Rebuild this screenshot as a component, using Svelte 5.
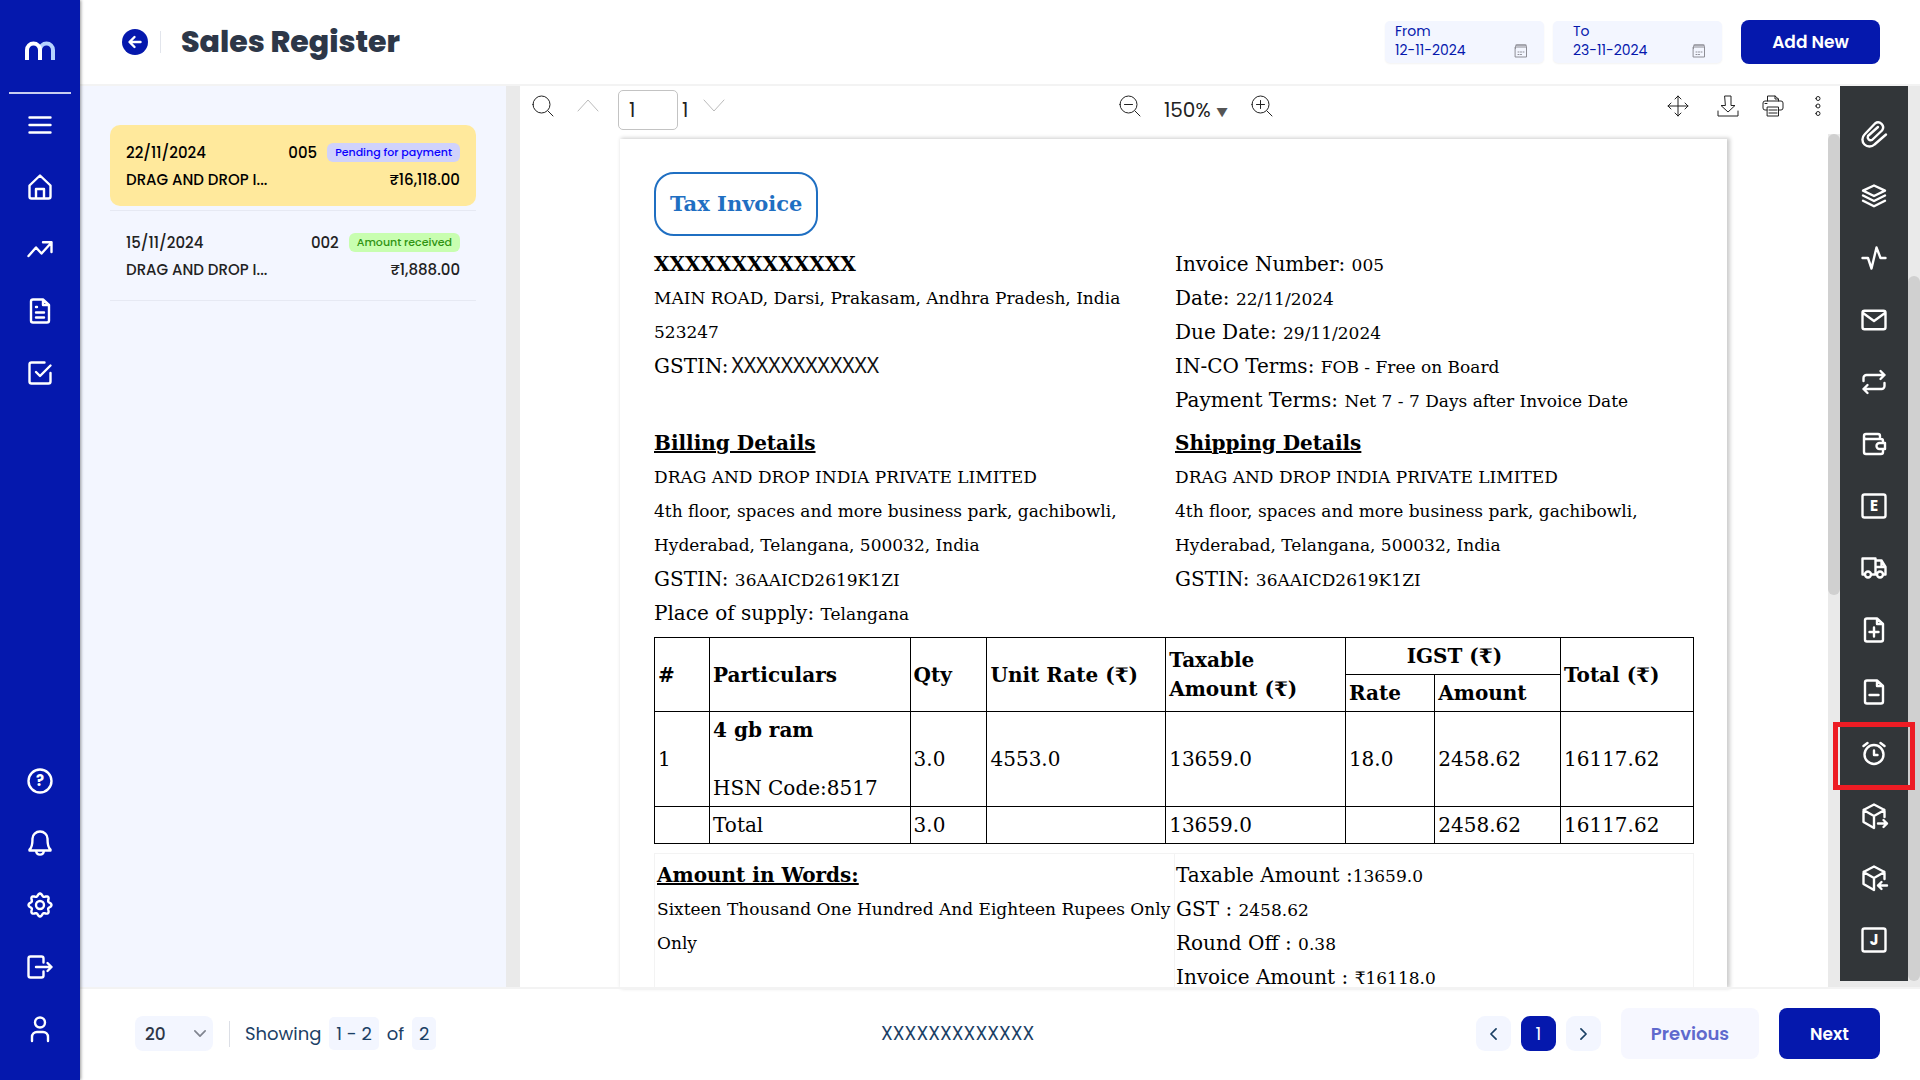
<script>
let pageSize = $state('20');
let fromDate = $state('12-11-2024');
let toDate = $state('23-11-2024');
let pdfPage = $state('1');
let selected = $state(0);

const invoices = [
     { date: '22/11/2024', no: '005', status: 'Pending for payment', kind: 'pending', party: 'DRAG AND DROP I...', amount: '₹16,118.00' },
     { date: '15/11/2024', no: '002', status: 'Amount received', kind: 'received', party: 'DRAG AND DROP I...', amount: '₹1,888.00' }
];

// icons are drawn around 0,0
const file = 'M3-11.5H-7a2 2 0 0 0-2 2V9.5a2 2 0 0 0 2 2H7a2 2 0 0 0 2-2V-6L3-11.5V-6H9';
const square = 'M-9.5-11.5h19a2 2 0 0 1 2 2v19a2 2 0 0 1-2 2h-19a2 2 0 0 1-2-2v-19a2 2 0 0 1 2-2Z';
const cube = 'M10.5 1V-6L0-11.5-10.5-6V6L0 12V0M-10.5-6L0 0 10.5-6';
const calendar = 'M-10-12H10M-11-8h22V12h-22ZM-11-5v-4a3 3 0 0 1 3-3H8a3 3 0 0 1 3 3v4M-6 2h2M-1 2h2M4 2h2M-6 7h2M-1 7h2';
const disc = (x, y, r) => `M${x - r} ${y}a${r} ${r} 0 1 0 ${2 * r} 0a${r} ${r} 0 1 0 ${-2 * r} 0Z`;
const lens = disc(-1.5, -1.5, 8.5) + 'M5 5L10 10';

function gear() {
     let points = [];
     for (let i = 0; i < 96; i++) {
          const a = (i / 96) * Math.PI * 2;
          const r = 10.2 + 1.3 * Math.cos(a * 8);
          points.push((r * Math.sin(a)).toFixed(2) + ' ' + (-r * Math.cos(a)).toFixed(2));
     }
     return 'M' + points.join('L') + 'Z' + disc(0, 0, 4);
}

const topNav = [
     { name: 'Menu', d: 'M-10.5-7.5h21M-10.5 0h21M-10.5 7.5h21' },
     { name: 'Home', d: 'M-10.5-1.5L0-11.5 10.5-1.5V9.5a2 2 0 0 1-2 2h-17a2 2 0 0 1-2-2ZM-4 11.5V2h8v9.5' },
     { name: 'Trends', d: 'M-11.5 7L-4-1.5 1.5 4.5 11.5-6.5M3-6.8H11.5V3' },
     { name: 'Documents', d: file + 'M-4-4h1M-4 1.5h8M-4 6.5h8' },
     { name: 'Tasks', d: 'M4.5-10.5H-8.5a2 2 0 0 0-2 2V8.5a2 2 0 0 0 2 2H8.5a2 2 0 0 0 2-2V0M-4-1L0 3 10.5-7.5' }
];
const bottomNav = [
     { name: 'Help', d: disc(0, 0, 11.5), letter: '?' },
     { name: 'Notifications', d: 'M-7.5-4.5a7.5 7 0 0 1 15 0C7.5 2 8 5 10.5 6.5V7.5H-10.5V6.5C-8 5-7.5 2-7.5-4.5ZM-4 7.5c.5 5.5 7.5 5.5 8 0' },
     { name: 'Settings', d: gear() },
     { name: 'Log out', d: 'M3.5-4.5V-8.5a2 2 0 0 0-2-2H-9.5a2 2 0 0 0-2 2V8.5a2 2 0 0 0 2 2H1.5a2 2 0 0 0 2-2V4.5M-4 0H11.5M7.5-4L11.5 0 7.5 4' },
     { name: 'Profile', d: disc(0, -6.5, 5) + 'M-8 12V8a5 5 0 0 1 5-5H3a5 5 0 0 1 5 5v4' }
];
const rail = [
     { name: 'Attachments', d: 'M12 .5L.5 10.5a7 7 0 0 1-10-10L1-10.500a5 5 0 0 1 7 7L-2 6A3 3 0 0 1-6 2L4-7' },
     { name: 'Layers', d: 'M0-10.5L11-5.3 0 0-11-5.3ZM-11-.5L0 5 11-.5M-11 4.7L0 10.2 11 4.7' },
     { name: 'Activity', d: 'M-11.5 0H-6L-2.5 10.5 2.5-10.5 6.5 0H11.5' },
     { name: 'Email', d: 'M-9.5-9.3h19a2 2 0 0 1 2 2V7.3a2 2 0 0 1-2 2h-19a2 2 0 0 1-2-2V-7.3a2 2 0 0 1 2-2ZM-11-7L0 1 11-7' },
     { name: 'Recurring', d: 'M-10.5-1V-4a3 3 0 0 1 3-3H10.5M6.5-11L10.5-7 6.5-3M10.5 1V4a3 3 0 0 1-3 3H-10.5M-6.5 11L-10.5 7-6.5 3' },
     { name: 'Wallet', d: 'M6-5V-8a2 2 0 0 0-2-2H-8a2 2 0 0 0-2 2V8a2 2 0 0 0 2 2H7a2 2 0 0 0 2-2V5M-10-7a2 2 0 0 0 2 2H7a2 2 0 0 1 2 2v2M11-1H5.5a3 3 0 0 0 0 6H11Z' },
     { name: 'E-invoice', d: square, letter: 'E' },
     { name: 'E-way bill', d: 'M-9.5 6.5h-2V-9.5H1.5V6.5H-2.5M1.5-7.5H7.5L11.5-1V6.5H9.5M1.5 6.5H2.5M7.5-7.5V-1M1.5-1H11.5' + disc(-6, 6.5, 3) + disc(6, 6.5, 3) },
     { name: 'Add note', d: file + 'M-4.5 2h9M0-2.5v9' },
     { name: 'Remove note', d: file + 'M-4.5 3h9' },
     { name: 'Reminder', d: disc(0, 0.5, 9.5) + 'M-10.5-8L-6.5-11M10.5-8L6.5-11M0-3.5V1H3.5', marked: true },
     { name: 'Goods out', d: cube + 'M4 7.5H13M9.5 4L13 7.5 9.5 11' },
     { name: 'Goods in', d: cube + 'M13 7.5H4M7.5 4L4 7.5 7.5 11' },
     { name: 'Journal', d: square, letter: 'J' }
];

const address = ['DRAG AND DROP INDIA PRIVATE LIMITED', '4th floor, spaces and more business park, gachibowli,', 'Hyderabad, Telangana, 500032, India'];
const terms = [
     ['Invoice Number:', '005'],
     ['Date:', '22/11/2024'],
     ['Due Date:', '29/11/2024'],
     ['IN-CO Terms:', 'FOB - Free on Board'],
     ['Payment Terms:', 'Net 7 - 7 Days after Invoice Date']
];
</script>

{#snippet icon(d, letter, size)}
     <svg class={size ?? 'icon'} viewBox="-14 -14 28 28" aria-hidden="true">
          <path {d} />
          {#if letter}
               <text x="0" y="5" text-anchor="middle">{letter}</text>
          {/if}
     </svg>
{/snippet}

<div class="app">
     <aside class="sidebar">
          <a class="logo" href="#home" aria-label="Home page">
               <svg width="30" height="18" viewBox="0 0 30 18" aria-hidden="true">
                    <path d="M15 8A6 6 0 0 1 28 8V18" stroke="#b5d3ff" />
                    <path d="M2 18V8a6.5 6.5 0 0 1 13 0V18" stroke="#fff" />
               </svg>
          </a>
          <nav class="top-nav">
               {#each topNav as item}
                    <button type="button" aria-label={item.name}>{@render icon(item.d)}</button>
               {/each}
          </nav>
          <nav class="bottom-nav">
               {#each bottomNav as item}
                    <button type="button" aria-label={item.name}>{@render icon(item.d, item.letter)}</button>
               {/each}
          </nav>
     </aside>

     <div class="content">
          <header>
               <button class="back" type="button" aria-label="Back">
                    <svg width="26" height="26" viewBox="-13 -13 26 26" aria-hidden="true"><path d="M5.5 0H-5M-.5-5L-5.5 0-.5 5" /></svg>
               </button>
               <h1>Sales Register</h1>
               <div class="date">
                    <label for="from">From</label>
                    <input id="from" type="text" bind:value={fromDate}>
                    {@render icon(calendar, '', 'calendar')}
               </div>
               <div class="date to">
                    <label for="to">To</label>
                    <input id="to" type="text" bind:value={toDate}>
                    {@render icon(calendar, '', 'calendar')}
               </div>
               <button class="primary add" type="button">Add New</button>
          </header>

          <main>
               <section class="list">
                    {#each invoices as inv, index}
                         <div class="slot">
                              <button type="button" class="card" class:active={selected == index} onclick={() => selected = index}>
                                   <span class="row">
                                        <span class="grow">{inv.date}</span>
                                        <span>{inv.no}</span>
                                        <span class="badge {inv.kind}">{inv.status}</span>
                                   </span>
                                   <span class="row">
                                        <span class="grow">{inv.party}</span>
                                        <span>{inv.amount}</span>
                                   </span>
                              </button>
                         </div>
                    {/each}
               </section>
               <div class="list-track"></div>

               <section class="viewer">
                    <div class="toolbar">
                         <div class="tools">
                              <button type="button" aria-label="Search">{@render icon(lens, '', 'thin')}</button>
                              <button type="button" class="faded prev" aria-label="Previous page">{@render icon('M-10 5L0-6 10 5', '', 'thin')}</button>
                              <input type="text" aria-label="Page" bind:value={pdfPage}>
                              <span class="count">1</span>
                              <button type="button" class="faded" aria-label="Next page">{@render icon('M-10-6L0 5 10-6', '', 'thin')}</button>
                         </div>
                         <div class="tools">
                              <button type="button" aria-label="Zoom out">{@render icon(lens + 'M-5.5-1.5h8', '', 'thin')}</button>
                              <button type="button" class="zoom">150% <small>▼</small></button>
                              <button type="button" aria-label="Zoom in">{@render icon(lens + 'M-5.5-1.5h8M-1.5-5.5v8', '', 'thin')}</button>
                         </div>
                         <div class="tools right">
                              <button type="button" aria-label="Pan">{@render icon('M-10 0h20M0-10v20M-7-3L-10 0-7 3M7-3L10 0 7 3M-3-7L0-10 3-7M-3 7L0 10 3 7', '', 'thin')}</button>
                              <button type="button" class="download" aria-label="Download">{@render icon('M-3-10h6v9.5h4L0 6-7-.5h4ZM-10 5v5H10V5', '', 'thin')}</button>
                              <button type="button" aria-label="Print">{@render icon('M-5.5-5V-10H2L5.5-7V-5M2-10V-7H5.5M-6 4H-8a2 2 0 0 1-2-2V-3a2 2 0 0 1 2-2H8a2 2 0 0 1 2 2V2a2 2 0 0 1-2 2H6M-5.5 1h11v9h-11ZM-4 4h8M-4 7h8M-8-2.5h2', '', 'thin')}</button>
                              <button type="button" aria-label="More">{@render icon(disc(0, -7.5, 2) + disc(0, 0, 2) + disc(0, 7.5, 2), '', 'thin')}</button>
                         </div>
                    </div>

                    <div class="scroller">
                         <article class="page">
                              <h2 class="stamp">Tax Invoice</h2>
                              <div class="cols">
                                   <div>
                                        <p><b>XXXXXXXXXXXXX</b></p>
                                        <p class="small">MAIN ROAD, Darsi, Prakasam, Andhra Pradesh, India 523247</p>
                                        <p>GSTIN:<span class="masked">XXXXXXXXXXXX</span></p>
                                   </div>
                                   <div>
                                        {#each terms as [label, value]}
                                             <p>{label} <span class="val">{value}</span></p>
                                        {/each}
                                   </div>
                              </div>
                              <div class="cols parties">
                                   <div>
                                        <h3>Billing Details</h3>
                                        {#each address as line}
                                             <p class="small">{line}</p>
                                        {/each}
                                        <p>GSTIN: <span class="val">36AAICD2619K1ZI</span></p>
                                        <p>Place of supply: <span class="val">Telangana</span></p>
                                   </div>
                                   <div>
                                        <h3>Shipping Details</h3>
                                        {#each address as line}
                                             <p class="small">{line}</p>
                                        {/each}
                                        <p>GSTIN: <span class="val">36AAICD2619K1ZI</span></p>
                                   </div>
                              </div>
                              <table>
                                   <colgroup>
                                        <col style="width: 5.3%"><col style="width: 19.3%"><col style="width: 7.4%"><col style="width: 17.2%">
                                        <col style="width: 17.3%"><col style="width: 8.6%"><col style="width: 12.1%"><col style="width: 12.8%">
                                   </colgroup>
                                   <thead>
                                        <tr>
                                             <th rowspan="2">#</th>
                                             <th rowspan="2">Particulars</th>
                                             <th rowspan="2">Qty</th>
                                             <th rowspan="2">Unit Rate (₹)</th>
                                             <th rowspan="2">Taxable Amount (₹)</th>
                                             <th colspan="2" class="center">IGST (₹)</th>
                                             <th rowspan="2">Total (₹)</th>
                                        </tr>
                                        <tr>
                                             <th>Rate</th>
                                             <th>Amount</th>
                                        </tr>
                                   </thead>
                                   <tbody>
                                        <tr>
                                             <td>1</td>
                                             <td><b>4 gb ram</b><br><br>HSN Code:8517</td>
                                             <td>3.0</td>
                                             <td>4553.0</td>
                                             <td>13659.0</td>
                                             <td>18.0</td>
                                             <td>2458.62</td>
                                             <td>16117.62</td>
                                        </tr>
                                        <tr>
                                             <td></td>
                                             <td>Total</td>
                                             <td>3.0</td>
                                             <td></td>
                                             <td>13659.0</td>
                                             <td></td>
                                             <td>2458.62</td>
                                             <td>16117.62</td>
                                        </tr>
                                   </tbody>
                              </table>
                              <div class="cols summary">
                                   <div>
                                        <h3>Amount in Words:</h3>
                                        <p class="small">Sixteen Thousand One Hundred And Eighteen Rupees Only Only</p>
                                   </div>
                                   <div>
                                        <p>Taxable Amount :<span class="val">13659.0</span></p>
                                        <p>GST : <span class="val">2458.62</span></p>
                                        <p>Round Off : <span class="val">0.38</span></p>
                                        <p>Invoice Amount : <span class="val">₹16118.0</span></p>
                                   </div>
                              </div>
                         </article>
                         <div class="track"><div class="thumb"></div></div>
                    </div>
               </section>

               <div class="rail-wrap">
                    <nav class="rail">
                         {#each rail as item}
                              <button type="button" class:marked={item.marked} aria-label={item.name}>{@render icon(item.d, item.letter)}</button>
                         {/each}
                    </nav>
                    <div class="track outer"><div class="thumb"></div></div>
               </div>
          </main>

          <footer>
               <div class="group">
                    <span class="select">
                         <select aria-label="Rows per page" bind:value={pageSize}>
                              <option>20</option>
                              <option>50</option>
                         </select>
                         <svg width="12" height="7" viewBox="0 0 14 8" aria-hidden="true"><path d="M1 1l6 6 6-6" /></svg>
                    </span>
                    <span class="showing">Showing <span class="chip">1 - 2</span> of <span class="chip">2</span></span>
               </div>
               <span class="company">XXXXXXXXXXXXX</span>
               <div class="group">
                    <button type="button" class="pager" aria-label="Previous list page">
                         <svg width="7" height="12" viewBox="0 0 8 14" aria-hidden="true"><path d="M7 1L1 7l6 6" /></svg>
                    </button>
                    <button type="button" class="pager current">1</button>
                    <button type="button" class="pager" aria-label="Next list page">
                         <svg width="7" height="12" viewBox="0 0 8 14" aria-hidden="true"><path d="M1 1l6 6-6 6" /></svg>
                    </button>
                    <button type="button" class="previous">Previous</button>
                    <button type="button" class="primary next">Next</button>
               </div>
          </footer>
     </div>
</div>

<style>
:global(body) {
     margin: 0;
}
.app {
     display: flex;
     height: 100vh;
     overflow: hidden;
     font-family: Poppins, Inter, "Noto Sans", sans-serif;
     background-color: #fff;
}
.app * {
     box-sizing: border-box;
}
button, input, select {
     font: inherit;
     color: inherit;
     border: none;
     background-color: transparent;
     padding: 0;
     margin: 0;
}
button {
     cursor: pointer;
}
h1, h2, h3, p {
     margin: 0;
}
svg {
     fill: none;
     stroke: currentColor;
     stroke-linecap: round;
     stroke-linejoin: round;
     overflow: visible;
     display: block;
}
.icon {
     width: 28px;
     height: 28px;
     stroke-width: 2.4;
     & text {
          font-size: 15px;
          font-weight: 700;
          fill: currentColor;
          stroke: none;
     }
}
.thin {
     width: 28px;
     height: 28px;
     stroke-width: 1;
}

/* sidebar */
.sidebar {
     display: flex;
     flex-direction: column;
     width: 80px;
     flex-shrink: 0;
     padding-bottom: 20px;
     color: #fff;
     background-color: #0518ad;
     box-shadow: 1px 0 3px rgba(0, 0, 0, 0.4);
     z-index: 1;
}
.logo {
     display: flex;
     justify-content: center;
     height: 94px;
     margin: 0 9px;
     padding-top: 42px;
     border-bottom: 2px solid #c9cdf0;
     & svg {
          stroke-width: 4;
          stroke-linecap: butt;
     }
}
.top-nav, .bottom-nav, .rail {
     display: flex;
     flex-direction: column;
     & button {
          display: flex;
          align-items: center;
          justify-content: center;
          height: 62px;
     }
}
.bottom-nav {
     margin-top: auto;
}

.content {
     display: flex;
     flex-direction: column;
     flex: 1;
     min-width: 0;
}

/* header */
header {
     display: flex;
     align-items: center;
     height: 86px;
     flex-shrink: 0;
     padding: 0 40px 0 42px;
     border-bottom: 2px solid #f3f3f3;
}
.back {
     border-radius: 50%;
     color: #fff;
     background-color: #0518ad;
     & svg {
          stroke-width: 2.4;
     }
}
h1 {
     margin-left: 12px;
     margin-right: auto;
     padding-left: 20px;
     font-size: 30px;
     line-height: 22px;
     font-weight: 800;
     color: #2d3748;
     border-left: 1px solid #e2e5ec;
}
.date {
     display: grid;
     grid-template-columns: 1fr 14px;
     align-content: start;
     width: 159px;
     height: 42px;
     padding: 0 16px 0 10px;
     font-size: 14px;
     line-height: 20px;
     color: #0518ad;
     background-color: #f3f6ff;
     border-radius: 5px;
     box-shadow: 0 1px 2px rgba(0, 0, 0, 0.05);
     & label {
          grid-column: span 2;
     }
     & input {
          min-width: 0;
          height: 20px;
          padding-bottom: 2px;
     }
}
.date.to {
     width: 169px;
     margin-left: 9px;
     padding-left: 20px;
}
.calendar {
     width: 14px;
     height: 14px;
     align-self: center;
     color: #8d8d95;
     stroke-width: 2;
}
.primary {
     font-weight: 600;
     font-size: 17px;
     color: #fff;
     background-color: #0518ad;
     border-radius: 8px;
}
.add {
     width: 139px;
     height: 44px;
     margin-left: 19px;
}

main {
     display: flex;
     flex: 1;
     min-height: 0;
}

/* invoice list */
.list {
     width: 426px;
     flex-shrink: 0;
     padding: 35px 30px 0;
     background-color: #f3f6ff;
}
.slot {
     padding: 4px 0;
     border-bottom: 1px solid #e6e9f3;
}
.card {
     display: block;
     width: 100%;
     height: 81px;
     padding: 14px 16px;
     border-radius: 10px;
     font-size: 15px;
     font-weight: 500;
     color: #222;
     text-align: left;
}
.card.active {
     color: #000;
     background-color: #ffe99c;
}
.row {
     display: flex;
     align-items: center;
     height: 27px;
}
.grow {
     flex: 1;
}
.badge {
     margin-left: 10px;
     padding: 0 8px;
     font-size: 11px;
     line-height: 19px;
     font-weight: 500;
     border-radius: 6px;
}
.pending {
     color: #0a00ff;
     background-color: #d0d2fb;
}
.received {
     color: #2f9412;
     background-color: #c8feb0;
}
.list-track {
     width: 14px;
     flex-shrink: 0;
     background-color: #eaeaea;
}

/* pdf viewer */
.viewer {
     display: flex;
     flex-direction: column;
     flex: 1;
     min-width: 0;
}
.toolbar {
     display: flex;
     justify-content: space-between;
     height: 48px;
     flex-shrink: 0;
     padding: 0 8px 0 9px;
     font-size: 20px;
     color: #222;
}
.tools {
     display: flex;
     align-items: flex-start;
     padding-top: 6px;
     & input {
          width: 60px;
          height: 40px;
          padding: 0 10px;
          margin: -2px 4px 0 16px;
          border: 1px solid #c3c3c3;
          border-radius: 5px;
     }
}
.prev {
     margin-left: 17px;
}
.faded {
     color: #bbb;
}
.count {
     width: 18px;
     line-height: 36px;
}
.zoom {
     margin: 0 20px 0 20px;
     line-height: 36px;
     & small {
          font-size: 12px;
          color: #555;
     }
}
.right {
     gap: 17px;
}
.download {
     margin-left: 5px;
}
.scroller {
     display: flex;
     flex: 1;
     min-height: 0;
}
.page {
     flex: 1;
     min-width: 0;
     margin: 5px 101px 0 100px;
     padding: 33px 33px 0 34px;
     overflow: hidden;
     box-shadow: 2px 0 4px 1px rgba(0, 0, 0, 0.2);
     font-family: "DejaVu Serif", serif;
     font-size: 20px;
     line-height: 34px;
     color: #000;
}
.stamp {
     width: fit-content;
     padding: 13px 14px;
     font-size: 21px;
     border: 2px solid #1f6fc2;
     border-radius: 20px;
     color: #1f6fc2;
}
.cols {
     display: grid;
     grid-template-columns: 1fr 1fr;
     margin-top: 11px;
     & > div + div {
          padding-left: 1px;
     }
}
.cols.parties {
     margin-top: 9px;
}
h3 {
     font-size: 20px;
     text-decoration: underline;
     text-decoration-thickness: 2px;
}
.small, .val {
     font-size: 17px;
}
.val {
     line-height: 20px;
}
.masked {
     margin-left: 3px;
     font-family: "Noto Sans", sans-serif;
     font-size: 21px;
     line-height: 20px;
     color: #111;
}
table {
     width: 100%;
     margin-top: 7px;
     table-layout: fixed;
     border-collapse: collapse;
     line-height: 29px;
}
th, td {
     height: 37px;
     padding: 4px 0 3px 3px;
     border: 1px solid #000;
     text-align: left;
}
.center {
     text-align: center;
}
.summary {
     margin-top: 9px;
     border: 1px solid #f3f3f3;
     & > div {
          height: 300px;
          padding: 4px 0 0 2px;
     }
     & > div + div {
          border-left: 1px solid #f3f3f3;
     }
}
.track {
     width: 12px;
     flex-shrink: 0;
     background-color: #eaeaea;
}
.thumb {
     height: 54%;
     background-color: #d0d0d0;
     border-radius: 6px;
}

/* action rail */
.rail-wrap {
     display: flex;
     flex-shrink: 0;
     align-items: stretch;
     background-color: #eaeaea;
}
.rail {
     width: 68px;
     padding-top: 17px;
     margin-bottom: 6px;
     color: #fff;
     background-color: #323639;
}
.marked {
     position: relative;
}
.marked::after {
     content: "";
     position: absolute;
     inset: -1px -7px -5px -7px;
     border: 5px solid #ed1c24;
     z-index: 1;
}
.outer {
     padding: 190px 0 6px;
     & .thumb {
          height: 100%;
     }
}

/* footer */
footer {
     display: flex;
     align-items: center;
     justify-content: space-between;
     height: 93px;
     flex-shrink: 0;
     padding: 0 40px 2px 55px;
     border-top: 2px solid #f3f3f3;
     font-size: 18px;
     color: #1b4065;
}
.group {
     display: flex;
     align-items: center;
}
.company {
     font-size: 19px;
}
.select {
     position: relative;
     margin-right: 16px;
     & select {
          width: 78px;
          height: 35px;
          padding-left: 10px;
          appearance: none;
          font-size: 17px;
          font-weight: 500;
          color: #2d3748;
          background-color: #f3f6ff;
          border-radius: 8px;
     }
     & svg {
          position: absolute;
          right: 7px;
          top: 14px;
          stroke-width: 2;
          color: #808590;
          pointer-events: none;
     }
}
.showing {
     padding-left: 15px;
     line-height: 26px;
     border-left: 1px solid #dcdfe6;
}
.chip {
     margin: 0 3px;
     padding: 4px 7px;
     background-color: #f3f6ff;
     border-radius: 5px;
}
.pager {
     display: flex;
     align-items: center;
     justify-content: center;
     width: 35px;
     height: 35px;
     margin-right: 10px;
     background-color: #f3f6ff;
     border-radius: 9px;
     & svg {
          stroke-width: 2;
     }
}
.current {
     color: #fff;
     background-color: #0518ad;
}
.previous {
     width: 138px;
     height: 51px;
     margin-left: 10px;
     font-size: 18px;
     font-weight: 600;
     color: #5f69cd;
     background-color: #f6f7ff;
     border-radius: 8px;
}
.next {
     width: 101px;
     height: 51px;
     margin-left: 20px;
}
</style>
